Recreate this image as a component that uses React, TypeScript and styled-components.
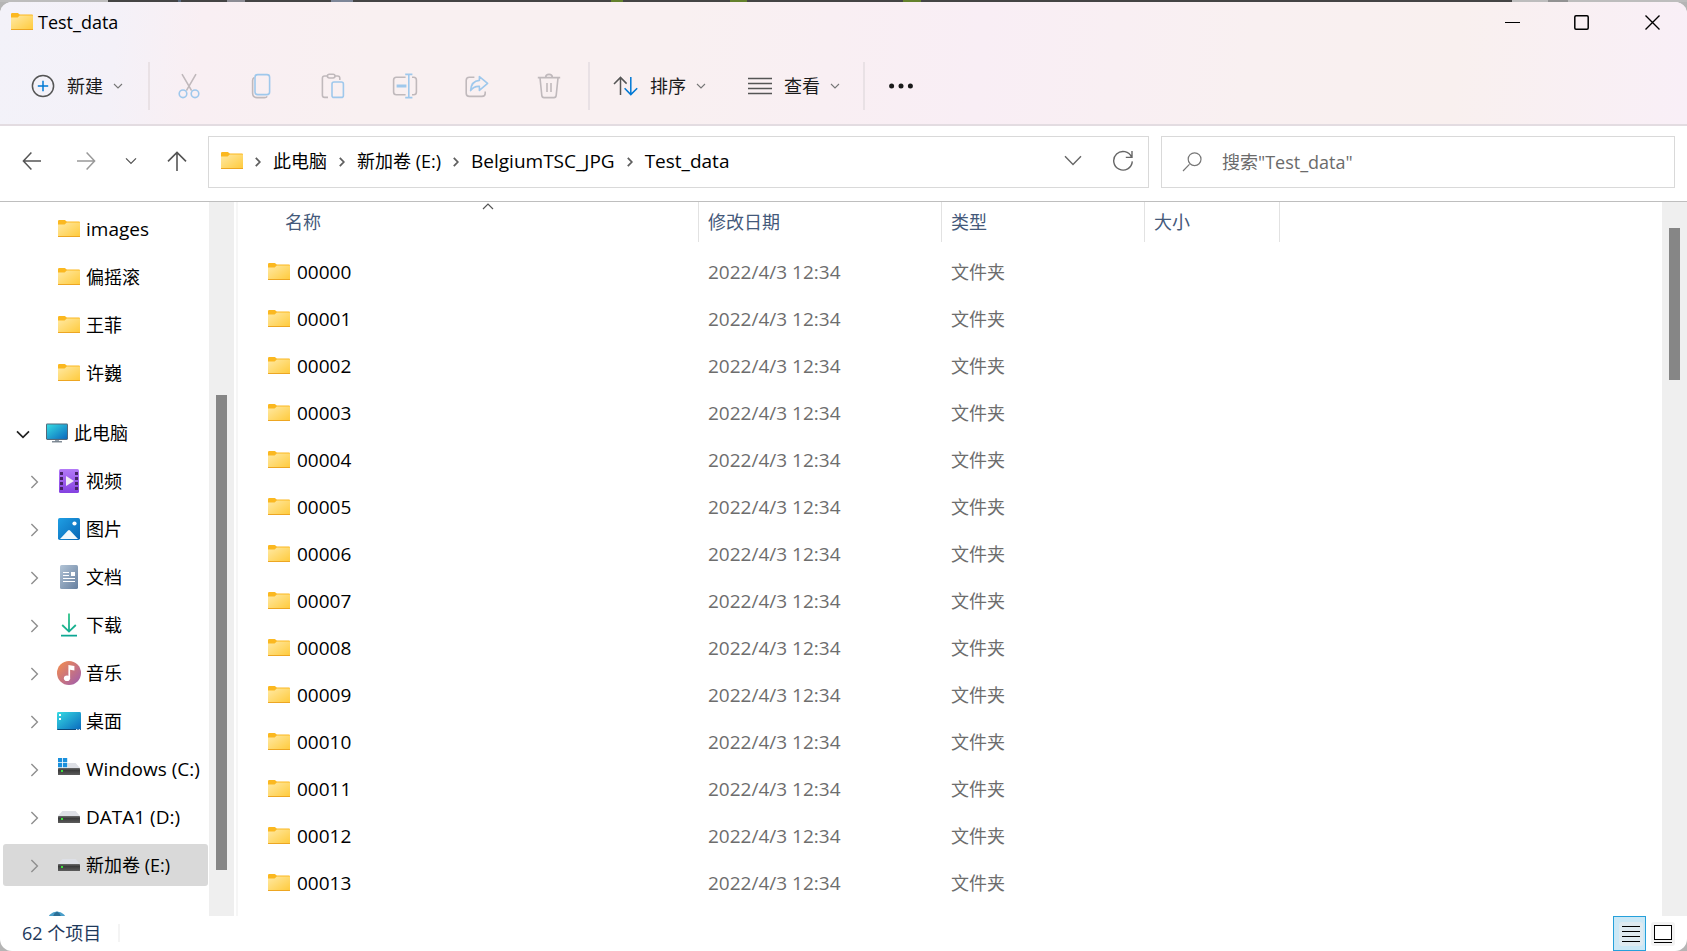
import React from "react";
import styled, { createGlobalStyle } from "styled-components";

const GlobalStyle = createGlobalStyle`
  * { box-sizing: border-box; }
  body {
    margin: 0;
    background: #bdbdbd;
    font-family: "Open Sans", "Noto Sans CJK SC", sans-serif;
    font-size: 18px;
    line-height: 24px;
    color: #000;
  }
  button, input {
    font: inherit;
    color: inherit;
    background: none;
    border: 0;
    padding: 0;
    margin: 0;
  }
  svg { display: block; flex: none; }
`;

/* ---------- frame ---------- */

const Desktop = styled.div`
  height: 100vh;
  min-height: 480px;
  display: flex;
  flex-direction: column;
  padding-top: 2px;
  background: linear-gradient(
      90deg,
      #bdbdbd 0 108px, #444 108px 178px, #5b6a80 178px 181px, #444 181px 227px,
      #8c8c94 227px 245px, #444 245px 331px, #7d8698 331px 353px, #444 353px 611px,
      #64812c 611px 623px, #444 623px 730px, #64812c 730px 747px, #444 747px 903px,
      #64812c 903px 921px, #444 921px 1512px, #bdbdbd 1512px 1548px,
      #929292 1548px 1568px, #bdbdbd 1568px
    )
    top / 100% 2px no-repeat #b5b5b5;
`;

const Window = styled.main`
  flex: 1;
  min-height: 0;
  display: flex;
  flex-direction: column;
  background: #fff;
  border-radius: 12px;
  overflow: hidden;
`;

const Mica = styled.header`
  flex: none;
  background: linear-gradient(
    96deg, #f3f2f9 0%, #f4f1f8 7%, #f9eff3 12%, #f9f0f1 22%, #f9f0f1 40%,
    #f9eef5 58%, #f9f0f1 74%, #f9f0ef 86%, #f9eff7 100%
  );
  border-bottom: 2px solid #e3dce1;
`;

const TitleBar = styled.div`
  display: flex;
  align-items: center;
  height: 40px;
  padding-left: 11px;
`;

const Title = styled.h1`
  flex: 1;
  margin: 0 0 0 5px;
  font-size: 18px;
  line-height: 24px;
  font-weight: 400;
`;

const CaptionButton = styled.button`
  width: 70px;
  height: 40px;
  display: flex;
  align-items: center;
  justify-content: center;
`;

const Toolbar = styled.div`
  display: flex;
  align-items: center;
  height: 82px;
  padding: 6px 0 0 20px;
`;

const MenuButton = styled.button`
  display: flex;
  align-items: center;
  gap: 12px;
  height: 48px;
  padding: 0 11px;
  color: #1b1b1b;
  white-space: nowrap;
  & > svg:last-child { margin-left: -2px; }
`;

const ToolGroup = styled.div<{ $gap?: number; $pad: number }>`
  display: flex;
  align-items: center;
  gap: ${(p) => p.$gap ?? 0}px;
  padding: 0 ${(p) => p.$pad}px;
`;

const ToolButton = styled.button`
  width: 48px;
  height: 48px;
  display: flex;
  align-items: center;
  justify-content: center;
`;

const ToolDivider = styled.span`
  width: 2px;
  height: 48px;
  background: #e9e1e5;
`;

/* ---------- address row ---------- */

const AddressRow = styled.div`
  flex: none;
  display: flex;
  align-items: center;
  height: 76px;
  padding: 0 12px 4px 8px;
  border-bottom: 1px solid #bebebe;
`;

const NavGroup = styled.nav`
  flex: none;
  width: 200px;
  display: flex;
  align-items: center;
  padding-bottom: 2px;
`;

const NavButton = styled.button<{ $w: number }>`
  width: ${(p) => p.$w}px;
  height: 48px;
  display: flex;
  align-items: center;
  justify-content: center;
`;

const AddressBox = styled.div`
  flex: 927 1 0;
  min-width: 0;
  height: 52px;
  display: flex;
  align-items: center;
  padding: 0 0 2px 12px;
  border: 1px solid #d9d9d9;
`;

const Crumbs = styled.ol`
  flex: 1;
  min-width: 0;
  display: flex;
  align-items: center;
  list-style: none;
  margin: 0;
  padding: 0;
  overflow: hidden;
`;

const Crumb = styled.li<{ $latin: boolean }>`
  display: flex;
  align-items: center;
  white-space: nowrap;
  font-size: ${(p) => (p.$latin ? 19 : 18)}px;
  & > svg { margin: 2px 12px 0; }
`;

const SearchBox = styled.label`
  flex: 472 1 0;
  min-width: 0;
  height: 52px;
  margin-left: 12px;
  display: flex;
  align-items: center;
  gap: 20px;
  padding: 0 20px;
  border: 1px solid #d9d9d9;
`;

const SearchInput = styled.input`
  flex: 1;
  min-width: 0;
  outline: 0;
  &::placeholder { color: #6b6b6b; opacity: 1; }
`;

/* ---------- body ---------- */

const Body = styled.div`
  flex: 1;
  min-height: 0;
  display: flex;
  overflow: hidden;
`;

const Sidebar = styled.nav`
  flex: none;
  width: 209px;
  padding: 3px 1px 0 3px;
  overflow: hidden;
`;

const Tree = styled.ul<{ $top?: number }>`
  list-style: none;
  margin: ${(p) => p.$top ?? 0}px 0 0;
  padding: 0;
`;

const TreeItem = styled.li`
  height: 48px;
  padding: 3px 0;
`;

const TreeLink = styled.a<{ $root?: boolean; $active?: boolean }>`
  display: grid;
  grid-template-columns: ${(p) => (p.$root ? "42px 24px 1fr" : "54px 24px 1fr")};
  align-items: center;
  height: 42px;
  border-radius: 3px;
  color: #000;
  text-decoration: none;
  white-space: nowrap;
  background: ${(p) => (p.$active ? "#d9d9d9" : "transparent")};
`;

const Expander = styled.span<{ $root?: boolean }>`
  display: flex;
  padding: 2px 0 0 ${(p) => (p.$root ? 13 : 27)}px;
`;

const IconSlot = styled.span`
  display: flex;
  justify-content: center;
`;

const TreeLabel = styled.span<{ $latin?: boolean }>`
  padding-left: 5px;
  font-size: ${(p) => (p.$latin ? 19 : 18)}px;
`;

const ScrollTrack = styled.div<{ $top: number; $bottom: number }>`
  flex: none;
  width: 25px;
  display: flex;
  flex-direction: column;
  padding: ${(p) => p.$top}px 7px ${(p) => p.$bottom}px;
  background: #efefef;
`;

const ScrollThumb = styled.div<{ $height?: number }>`
  flex: ${(p) => (p.$height ? `0 0 ${p.$height}px` : "1")};
  width: 11px;
  background: #868686;
`;

const Splitter = styled.div`
  flex: none;
  width: 4px;
  border-right: 2px solid #f6f6f6;
`;

const FilePane = styled.section`
  flex: 1;
  min-width: 0;
  overflow: hidden;
`;

const FileTable = styled.table`
  width: 100%;
  table-layout: fixed;
  border-collapse: collapse;
`;

const HeadCell = styled.th`
  padding: 0 0 6px;
  text-align: left;
  font-weight: 400;
`;

const HeadButton = styled.button<{ $indent: number }>`
  position: relative;
  display: flex;
  align-items: center;
  width: 100%;
  height: 40px;
  padding: 0 0 0 ${(p) => p.$indent}px;
  border-right: 1px solid #e2e2e2;
  color: #44597a;
`;

const SortMark = styled.span`
  position: absolute;
  top: 1px;
  left: 50%;
  margin-left: 14px;
`;

const Cell = styled.td<{ $latin?: boolean }>`
  height: 47px;
  padding: 0 0 0 9px;
  color: #6d6d6d;
  font-size: ${(p) => (p.$latin ? 19 : 18)}px;
  white-space: nowrap;
`;

const NameCell = styled(Cell)`
  padding-left: 30px;
`;

const FileName = styled.a`
  display: flex;
  align-items: center;
  gap: 7px;
  color: #000;
  text-decoration: none;
`;

const StatusBar = styled.footer`
  flex: none;
  display: flex;
  align-items: center;
  height: 35px;
  padding: 0 12px 0 22px;
  color: #1e395b;
`;

const StatusText = styled.span`
  margin-bottom: 2px;
  padding-right: 17px;
  border-right: 2px solid #f4f4f4;
  line-height: 18px;
`;

const ViewSwitch = styled.div`
  margin-left: auto;
  display: flex;
  gap: 5px;
`;

const ViewButton = styled.button<{ $on?: boolean }>`
  width: ${(p) => (p.$on ? 33 : 24)}px;
  height: 35px;
  display: flex;
  align-items: center;
  justify-content: center;
  padding-left: ${(p) => (p.$on ? 3 : 0)}px;
  background: ${(p) => (p.$on ? "#cbe8f6" : "transparent")};
  border: ${(p) => (p.$on ? "1px solid #26a0da" : "0")};
`;

/* ---------- icons ---------- */

const FolderIcon = () => (
  <svg width="22" height="18" viewBox="0 0 22 18">
    <defs>
      <linearGradient id="folder" x1="0" y1="0" x2="1" y2="1">
        <stop offset="0" stopColor="#ffe9a4" />
        <stop offset="1" stopColor="#ffca3a" />
      </linearGradient>
    </defs>
    <path d="M0 1.2Q0 0 1.2 0H6.6Q7.2 0 7.8.7L8.8 1.6H21Q22 1.6 22 2.6V8H0Z" fill="#fbb820" />
    <path d="M0 4.4H6.6L8.8 2.6H22V16.2Q22 17 21.2 17H.8Q0 17 0 16.2Z" fill="url(#folder)" />
    <path d="M0 16H22V16.4Q22 17 21.2 17H.8Q0 17 0 16.4Z" fill="#eda622" />
  </svg>
);

type StrokeProps = { w: number; h: number; d: string; color: string; sw?: number };
const Stroke = ({ w, h, d, color, sw = 1.4 }: StrokeProps) => (
  <svg width={w} height={h} viewBox={`0 0 ${w} ${h}`} fill="none" stroke={color} strokeWidth={sw}>
    <path d={d} />
  </svg>
);

const SmallChevron = () => <Stroke w={10} h={6} d="M1 1L5 5L9 1" color="#777" sw={1.1} />;
const CrumbArrow = () => <Stroke w={6} h={12} d="M.8 1.8L4.8 6L.8 10.2" color="#5f5f5f" sw={1.8} />;

const GREY = "#c0b9bc";
const BLUE = "#9fc8ec";

const ToolIcon = ({ children }: { children: React.ReactNode }) => (
  <svg width="26" height="26" viewBox="0 0 26 26" fill="none" strokeWidth="1.6">
    {children}
  </svg>
);

const NewIcon = () => (
  <svg width="24" height="24" viewBox="0 0 24 24" fill="none" strokeWidth="1.5">
    <circle cx="12" cy="12" r="10.6" stroke="#555" />
    <path d="M12 6.8V17.2M6.8 12H17.2" stroke="#0078d4" />
  </svg>
);

const CutIcon = () => (
  <ToolIcon>
    <path d="M6 1.2L15.6 17.6M20 1.2L10.4 17.6" stroke={GREY} />
    <circle cx="7" cy="20.8" r="3.8" stroke={BLUE} />
    <circle cx="19" cy="20.8" r="3.8" stroke={BLUE} />
  </ToolIcon>
);

const CopyIcon = () => (
  <ToolIcon>
    <path d="M6.4 4.4Q4.6 5.4 4.6 7.6V20Q4.6 24.6 9 24.6H16.4Q18.4 24.6 19.2 23.4" stroke={GREY} />
    <rect x="7" y="1.6" width="14.6" height="20" rx="2.6" stroke={BLUE} />
  </ToolIcon>
);

const PasteIcon = () => (
  <ToolIcon>
    <path d="M8 24.4H4.6Q2.4 24.4 2.4 22.2V5.2Q2.4 3 4.6 3H7.4M15 3H17.6Q19.8 3 19.8 5.2V7" stroke={GREY} />
    <rect x="7.4" y="1.2" width="7.6" height="3.8" rx="1.9" stroke={GREY} />
    <rect x="12" y="9" width="11.4" height="15.4" rx="2" stroke={BLUE} />
  </ToolIcon>
);

const RenameIcon = () => (
  <ToolIcon>
    <path d="M13.6 4.2H4.4Q1.6 4.2 1.6 7V19Q1.6 21.8 4.4 21.8H13.6M20 4.2H21.6Q24.4 4.2 24.4 7V19Q24.4 21.8 21.6 21.8H20" stroke={GREY} />
    <path d="M16.8 1.4V24.6M13.2 1.4H20.4M13.2 24.6H20.4" stroke={BLUE} />
    <path d="M4.6 13H14.4" stroke={BLUE} strokeWidth="2.8" />
  </ToolIcon>
);

const ShareIcon = () => (
  <ToolIcon>
    <path d="M10.4 4.2H5.4Q2.2 4.2 2.2 7.4V20.2Q2.2 23.4 5.4 23.4H18Q21.2 23.4 21.2 20.2V18.6" stroke={GREY} />
    <path d="M15.4 3.6L23.6 10.4L15.4 17.4V13.4Q9.6 13 6.6 17.6Q7.2 8 15.4 7.4Z" stroke={BLUE} strokeLinejoin="round" />
  </ToolIcon>
);

const TrashIcon = () => (
  <ToolIcon>
    <path d="M1.8 4.6H24.2M9.6 4.4Q9.8 1.4 13 1.4T16.4 4.4M4 4.8L5.8 22.4Q6 24.6 8 24.6H18Q20 24.6 20.2 22.4L22 4.8M11 10V19M15 10V19" stroke={GREY} />
  </ToolIcon>
);

const SortIcon = () => (
  <svg width="25" height="20" viewBox="0 0 25 20" fill="none" strokeWidth="1.5">
    <path d="M7.5 19V1.6M1 8L7.5 1.4L13.6 7.6" stroke="#555" />
    <path d="M17.8 1V18.4M11.6 12.2L17.8 18.6L24.2 12.2" stroke="#0078d4" />
  </svg>
);

const LinesIcon = () => (
  <Stroke w={24} h={18} d="M0 1.5H24M0 6.5H24M0 11.5H24M0 16.5H24" color="#555" sw={1.5} />
);

const DotsIcon = () => (
  <svg width="24" height="6" viewBox="0 0 24 6" fill="#1a1a1a">
    <circle cx="2.6" cy="3" r="2.5" />
    <circle cx="12" cy="3" r="2.5" />
    <circle cx="21.4" cy="3" r="2.5" />
  </svg>
);

const RefreshIcon = () => (
  <Stroke w={22} h={22} d="M19.6 7.2A9.3 9.3 0 1 0 20.3 11.4M20 1V7.4H13.8" color="#666" />
);

const MonitorIcon = () => (
  <svg width="22" height="20" viewBox="0 0 22 20">
    <defs>
      <linearGradient id="screen" x1="0" y1="0" x2="1" y2="1">
        <stop offset="0" stopColor="#36dbe3" />
        <stop offset="1" stopColor="#0a68bd" />
      </linearGradient>
    </defs>
    <rect y=".5" width="22" height="16.5" rx="1.4" fill="#53687a" />
    <rect x="1" y="1.5" width="20" height="14.4" fill="url(#screen)" />
    <path d="M9 17H13V18.4H9Z" fill="#98a2ad" />
    <path d="M6 18.2H16V19.4H6Z" fill="#65717e" />
  </svg>
);

const VideoIcon = () => (
  <svg width="20" height="24" viewBox="0 0 20 24">
    <defs>
      <linearGradient id="film" x1="0" y1="0" x2="0" y2="1">
        <stop offset="0" stopColor="#b37af7" />
        <stop offset="1" stopColor="#8441e0" />
      </linearGradient>
    </defs>
    <rect width="20" height="24" rx="1.5" fill="url(#film)" />
    {[3, 8, 13, 18].map((y) => (
      <path key={y} d={`M1 ${y}H4V${y + 3}H1ZM16 ${y}H19V${y + 3}H16Z`} fill="#472468" />
    ))}
    <path d="M7 7L15 12L7 17Z" fill="#f1ecf5" />
  </svg>
);

const PictureIcon = () => (
  <svg width="22" height="22" viewBox="0 0 22 22">
    <defs>
      <linearGradient id="sky" x1="0" y1="0" x2="1" y2="1">
        <stop offset="0" stopColor="#1f9fe4" />
        <stop offset="1" stopColor="#0865b4" />
      </linearGradient>
    </defs>
    <rect width="22" height="22" rx="1.8" fill="url(#sky)" />
    <path d="M2 21L10 12.6Q11 11.6 12 12.6L20 21Z" fill="#f2f8fc" />
    <circle cx="16.5" cy="5.5" r="2.1" fill="#fff" />
  </svg>
);

const DocumentIcon = () => (
  <svg width="18" height="24" viewBox="0 0 18 24">
    <defs>
      <linearGradient id="paper" x1="0" y1="0" x2="1" y2="1">
        <stop offset="0" stopColor="#b2c4d6" />
        <stop offset="1" stopColor="#667f9f" />
      </linearGradient>
    </defs>
    <rect width="18" height="24" rx="1.6" fill="url(#paper)" />
    <path d="M3 7.5H9M3 10.5H9M3 13.5H15M3 16.5H15" stroke="#fff" strokeWidth="1.1" />
    <path d="M11 7H15V11H11Z" fill="#fff" />
  </svg>
);

const DownloadIcon = () => (
  <svg width="16" height="24" viewBox="0 0 16 24" fill="none" strokeWidth="1.8">
    <defs>
      <linearGradient id="down" gradientUnits="userSpaceOnUse" x1="0" y1="0" x2="8" y2="24">
        <stop offset="0" stopColor="#37c987" />
        <stop offset="1" stopColor="#0aa594" />
      </linearGradient>
    </defs>
    <path d="M8 .5V18M1.2 12L8 18.6L14.8 12M0 22.6H16" stroke="url(#down)" />
  </svg>
);

const MusicIcon = () => (
  <svg width="24" height="24" viewBox="0 0 24 24">
    <defs>
      <linearGradient id="disc" x1="0" y1="0" x2="1" y2="1">
        <stop offset="0.1" stopColor="#ee8a55" />
        <stop offset="1" stopColor="#9d5bb0" />
      </linearGradient>
    </defs>
    <circle cx="12" cy="12" r="12" fill="url(#disc)" />
    <ellipse cx="10" cy="17.2" rx="3.1" ry="2.8" fill="#fff" />
    <path d="M11.4 4L17.4 5V9.4L13.1 8.8V17.4H11.4Z" fill="#fff" />
  </svg>
);

const DesktopIcon = () => (
  <svg width="24" height="18" viewBox="0 0 24 18">
    <rect width="24" height="18" rx="1.4" fill="url(#screen)" />
    <path d="M2 2H4V4H2ZM2 6H4V8H2Z" fill="#fff" />
    <path d="M0 17H24V17.2Q23.6 18 23 18H1Q.3 18 0 17.2Z" fill="#0b4779" />
    <path d="M19 17H20.4V18H19ZM21.6 17H23V18H21.6Z" fill="#cfe8f8" />
  </svg>
);

const DriveIcon = ({ system }: { system?: boolean }) => (
  <svg width="22" height={system ? 22 : 12} viewBox={system ? "0 -5 22 22" : "0 0 22 12"}>
    <defs>
      <linearGradient id="drive" x1="0" y1="0" x2="0" y2="1">
        <stop offset="0" stopColor="#6a6a6a" />
        <stop offset=".35" stopColor="#3b3b3b" />
        <stop offset="1" stopColor="#5c5c5c" />
      </linearGradient>
    </defs>
    <path d="M4.4 0H17.6L22 5H0Z" fill="#dee0e6" />
    <rect y="5" width="22" height="7" rx=".6" fill="url(#drive)" />
    <rect x="3" y="7" width="2" height="2" fill="#3be03b" />
    {system && (
      <>
        <rect y="-5" width="9.6" height="9.6" fill="#fff" />
        <path d="M0-5H4.2V-.8H0ZM5-5H9.2V-.8H5ZM0 0H4.2V4.2H0ZM5 0H9.2V4.2H5Z" fill="#1a90dd" />
      </>
    )}
  </svg>
);

const NetworkIcon = () => (
  <svg width="22" height="24" viewBox="0 0 22 24">
    <circle cx="11" cy="10" r="9.5" fill="#4a9fca" />
    <path d="M11 .5Q6 3 7 10H15Q16 3 11 .5Z" fill="#2c6f96" />
    <path d="M5 21H17V23H5Z" fill="#65717e" />
  </svg>
);

/* ---------- data ---------- */

const pinned = ["images", "偏摇滚", "王菲", "许巍"];

const places: { label: string; icon: React.ReactNode; active?: boolean }[] = [
  { label: "视频", icon: <VideoIcon /> },
  { label: "图片", icon: <PictureIcon /> },
  { label: "文档", icon: <DocumentIcon /> },
  { label: "下载", icon: <DownloadIcon /> },
  { label: "音乐", icon: <MusicIcon /> },
  { label: "桌面", icon: <DesktopIcon /> },
  { label: "Windows (C:)", icon: <DriveIcon system /> },
  { label: "DATA1 (D:)", icon: <DriveIcon /> },
  { label: "新加卷 (E:)", icon: <DriveIcon />, active: true },
];

const crumbs = ["此电脑", "新加卷 (E:)", "BelgiumTSC_JPG", "Test_data"];

const tools = [
  { label: "剪切", icon: <CutIcon /> },
  { label: "复制", icon: <CopyIcon /> },
  { label: "粘贴", icon: <PasteIcon /> },
  { label: "重命名", icon: <RenameIcon /> },
  { label: "共享", icon: <ShareIcon /> },
  { label: "删除", icon: <TrashIcon /> },
];

const files = Array.from({ length: 14 }, (_, i) => String(i).padStart(5, "0"));

/* Latin-only labels are set one size up so that they stand level with the Han text. */
const isLatin = (text: string) => /^[\x20-\x7e]+$/.test(text);

export default function App() {
  return (
    <>
      <GlobalStyle />
      <Desktop>
        <Window>
          <Mica>
            <TitleBar>
              <FolderIcon />
              <Title>Test_data</Title>
              <CaptionButton aria-label="最小化">
                <Stroke w={15} h={15} d="M0 7.5H15" color="#000" sw={1} />
              </CaptionButton>
              <CaptionButton aria-label="最大化">
                <Stroke w={16} h={15} d="M2 .8H13Q14.2.8 14.2 2V13Q14.2 14.2 13 14.2H2Q.8 14.2.8 13V2Q.8.8 2 .8Z" color="#000" sw={1.5} />
              </CaptionButton>
              <CaptionButton aria-label="关闭">
                <Stroke w={15} h={15} d="M.5.5L14.5 14.5M14.5.5L.5 14.5" color="#000" />
              </CaptionButton>
            </TitleBar>
            <Toolbar>
              <MenuButton>
                <NewIcon />
                新建
                <SmallChevron />
              </MenuButton>
              <ToolGroup $pad={7} />
              <ToolDivider />
              <ToolGroup $gap={24} $pad={15}>
                {tools.map((t) => (
                  <ToolButton key={t.label} aria-label={t.label} disabled>
                    {t.icon}
                  </ToolButton>
                ))}
              </ToolGroup>
              <ToolDivider />
              <ToolGroup $gap={20} $pad={12}>
                <MenuButton>
                  <SortIcon />
                  排序
                  <SmallChevron />
                </MenuButton>
                <MenuButton>
                  <LinesIcon />
                  查看
                  <SmallChevron />
                </MenuButton>
              </ToolGroup>
              <ToolDivider />
              <ToolGroup $pad={12}>
                <ToolButton aria-label="查看更多">
                  <DotsIcon />
                </ToolButton>
              </ToolGroup>
            </Toolbar>
          </Mica>

          <AddressRow>
            <NavGroup aria-label="导航">
              <NavButton $w={48} aria-label="后退">
                <Stroke w={20} h={20} d="M19 10H1.6M9.4 1.6L1.4 10L9.4 18.4" color="#555" sw={1.5} />
              </NavButton>
              <NavButton $w={60} aria-label="前进">
                <Stroke w={20} h={20} d="M1 10H18.4M10.6 1.6L18.6 10L10.6 18.4" color="#999" sw={1.5} />
              </NavButton>
              <NavButton $w={30} aria-label="最近浏览的位置">
                <Stroke w={12} h={8} d="M1 1.4L6 6.4L11 1.4" color="#555" sw={1.3} />
              </NavButton>
              <NavButton $w={62} aria-label="上移">
                <Stroke w={20} h={20} d="M10 20V1.6M1 10.4L10 1.4L19 10.4" color="#555" sw={1.6} />
              </NavButton>
            </NavGroup>
            <AddressBox>
              <FolderIcon />
              <Crumbs>
                {crumbs.map((c) => (
                  <Crumb key={c} $latin={isLatin(c)}>
                    <CrumbArrow />
                    <button>{c}</button>
                  </Crumb>
                ))}
              </Crumbs>
              <NavButton $w={50} aria-label="以前的位置">
                <Stroke w={18} h={11} d="M1 1.2L9 9.4L17 1.2" color="#666" />
              </NavButton>
              <NavButton $w={50} aria-label="刷新">
                <RefreshIcon />
              </NavButton>
            </AddressBox>
            <SearchBox>
              <Stroke w={20} h={20} d="M7.4 12.4L1 19M19 7.2A6.4 6.4 0 1 1 6.2 7.2A6.4 6.4 0 1 1 19 7.2" color="#777" sw={1.2} />
              <SearchInput type="text" aria-label="搜索" placeholder={'搜索"Test_data"'} />
            </SearchBox>
          </AddressRow>

          <Body>
            <Sidebar aria-label="文件夹">
              <Tree>
                {pinned.map((label) => (
                  <TreeItem key={label}>
                    <TreeLink href="#">
                      <Expander />
                      <IconSlot><FolderIcon /></IconSlot>
                      <TreeLabel $latin={isLatin(label)}>{label}</TreeLabel>
                    </TreeLink>
                  </TreeItem>
                ))}
              </Tree>
              <Tree $top={12}>
                <TreeItem>
                  <TreeLink href="#" $root>
                    <Expander $root>
                      <Stroke w={14} h={9} d="M1 1.4L7 7.4L13 1.4" color="#222" sw={1.7} />
                    </Expander>
                    <IconSlot><MonitorIcon /></IconSlot>
                    <TreeLabel>此电脑</TreeLabel>
                  </TreeLink>
                </TreeItem>
                {places.map((p) => (
                  <TreeItem key={p.label}>
                    <TreeLink href="#" $active={p.active}>
                      <Expander>
                        <Stroke w={9} h={14} d="M1.4 1L7.4 7L1.4 13" color="#8f8f8f" />
                      </Expander>
                      <IconSlot>{p.icon}</IconSlot>
                      <TreeLabel $latin={isLatin(p.label)}>{p.label}</TreeLabel>
                    </TreeLink>
                  </TreeItem>
                ))}
              </Tree>
              <Tree $top={10}>
                <TreeItem>
                  <TreeLink href="#" $root aria-label="网络">
                    <Expander $root />
                    <IconSlot><NetworkIcon /></IconSlot>
                  </TreeLink>
                </TreeItem>
              </Tree>
            </Sidebar>
            <ScrollTrack $top={193} $bottom={46}>
              <ScrollThumb />
            </ScrollTrack>
            <Splitter />
            <FilePane>
              <FileTable>
                <colgroup>
                  <col width="461" />
                  <col width="243" />
                  <col width="203" />
                  <col width="135" />
                  <col />
                </colgroup>
                <thead>
                  <tr>
                    <HeadCell scope="col">
                      <HeadButton $indent={47}>
                        名称
                        <SortMark>
                          <Stroke w={12} h={7} d="M1 6L6 1L11 6" color="#555" sw={1.2} />
                        </SortMark>
                      </HeadButton>
                    </HeadCell>
                    <HeadCell scope="col"><HeadButton $indent={9}>修改日期</HeadButton></HeadCell>
                    <HeadCell scope="col"><HeadButton $indent={9}>类型</HeadButton></HeadCell>
                    <HeadCell scope="col"><HeadButton $indent={9}>大小</HeadButton></HeadCell>
                    <td />
                  </tr>
                </thead>
                <tbody>
                  {files.map((name) => (
                    <tr key={name}>
                      <NameCell $latin>
                        <FileName href="#">
                          <FolderIcon />
                          {name}
                        </FileName>
                      </NameCell>
                      <Cell $latin>2022/4/3 12:34</Cell>
                      <Cell>文件夹</Cell>
                      <Cell />
                      <Cell />
                    </tr>
                  ))}
                </tbody>
              </FileTable>
            </FilePane>
            <ScrollTrack $top={26} $bottom={0}>
              <ScrollThumb $height={152} />
            </ScrollTrack>
          </Body>

          <StatusBar>
            <StatusText>62 个项目</StatusText>
            <ViewSwitch>
              <ViewButton $on aria-label="详细信息">
                <svg width="24" height="24" viewBox="0 0 24 24">
                  <rect width="24" height="24" rx="3" fill="#dfeaf0" />
                  <path d="M3 4.5H21M3 9.5H21M3 14.5H21M3 19.5H21" stroke="#000" />
                </svg>
              </ViewButton>
              <ViewButton aria-label="大缩略图">
                <svg width="24" height="24" viewBox="0 0 24 24">
                  <rect width="24" height="24" rx="3" fill="#f3f3f3" />
                  <rect x="3.5" y="3.5" width="17" height="14" fill="#fff" stroke="#000" />
                  <path d="M3 20.5H21" stroke="#000" />
                </svg>
              </ViewButton>
            </ViewSwitch>
          </StatusBar>
        </Window>
      </Desktop>
    </>
  );
}
